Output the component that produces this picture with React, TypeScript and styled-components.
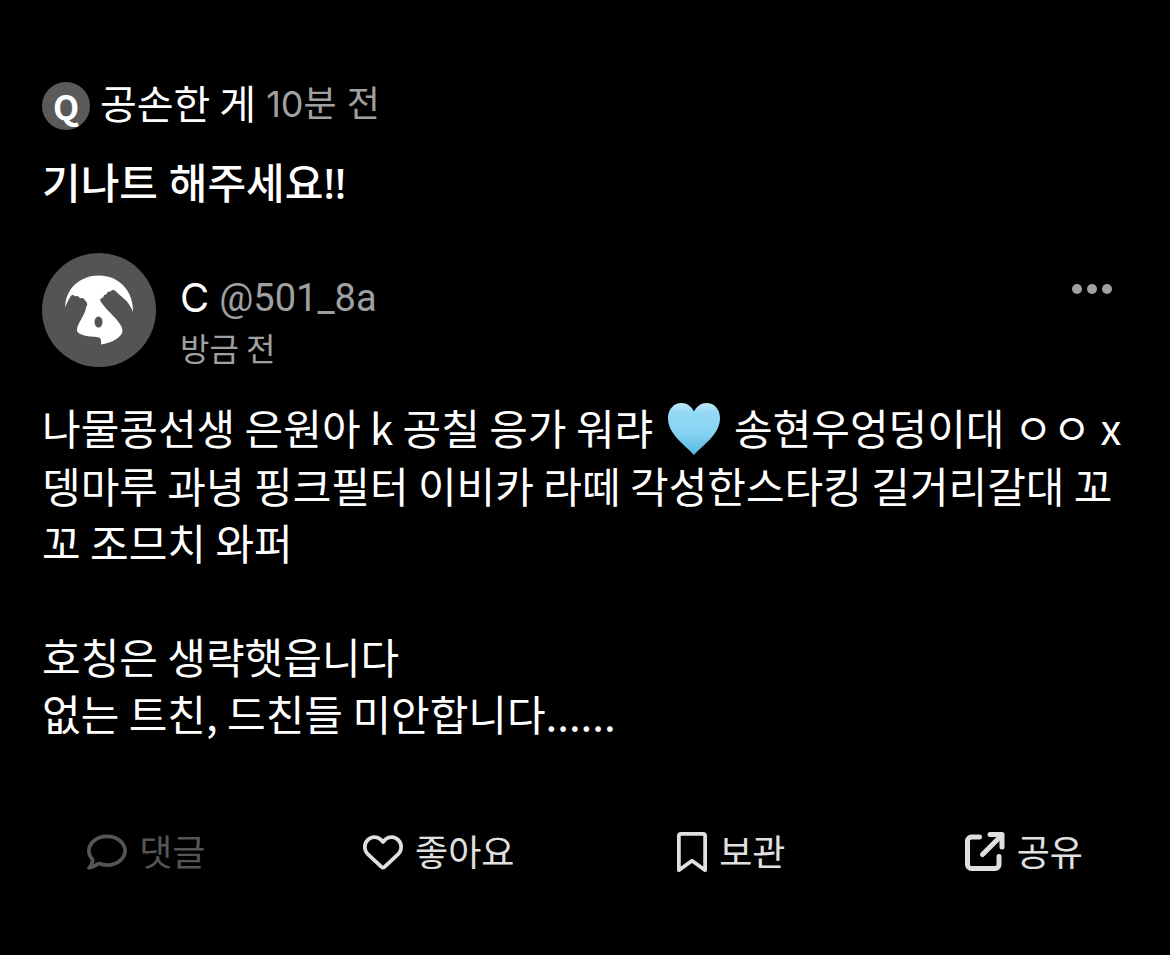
import React from 'react';
import styled, { createGlobalStyle } from 'styled-components';
import { FaRegBookmark, FaRegComment, FaRegHeart } from 'react-icons/fa6';

const GlobalStyle = createGlobalStyle`
  * { box-sizing: border-box; }
  body {
    margin: 0;
    background: #000;
    color: #fff;
    font-family: "Noto Sans CJK KR", sans-serif;
  }
`;

const Page = styled.main`
  padding: 72px 0;
`;

const Content = styled.article`
  padding: 0 42px;
`;

const AskerRow = styled.header`
  display: flex;
  align-items: flex-start;
  gap: 10px;
  height: 60px;
`;

const AskerBadge = styled.span`
  display: grid;
  place-items: center;
  width: 48px;
  height: 48px;
  margin-top: 10px;
  border-radius: 50%;
  background: #5a5a5a;
  font-size: 34px;
  font-weight: 700;
  line-height: 48px;
`;

const Name = styled.span`
  font-size: 40px;
  line-height: 60px;
`;

const Muted = styled.span`
  font-family: Inter, "Noto Sans CJK KR", sans-serif;
  font-size: 36px;
  line-height: 64px;
  color: #a0a0a0;
`;

const PostedAt = styled.time`
  font-size: 32px;
  line-height: 48px;
  color: #a0a0a0;
`;

const Question = styled.h1`
  margin: 23px 0 0;
  font-family: "Noto Sans", "Noto Sans CJK KR", sans-serif;
  font-size: 42px;
  font-weight: 500;
  line-height: 56px;
`;

const Profile = styled.section`
  display: flex;
  gap: 24px;
  margin-top: 42px;
`;

const Avatar = styled.svg`
  flex: none;
  width: 114px;
  height: 114px;
`;

const Identity = styled.div`
  flex: 1;
  display: flex;
  flex-direction: column;
  padding-top: 20px;
`;

const NameLine = styled.div`
  display: flex;
  align-items: center;
  gap: 10px;
  height: 50px;
  font-family: Inter, "Liberation Sans", sans-serif;
`;

const Handle = styled.a`
  font-family: Roboto, "Liberation Sans", sans-serif;
  font-size: 38px;
  line-height: 50px;
  color: #a0a0a0;
  text-decoration: none;
`;

const MoreButton = styled.button`
  align-self: flex-start;
  display: grid;
  padding: 0;
  margin: 30px 15px 0 0;
  border: 0;
  background: none;
  color: #a0a0a0;
`;

const Answer = styled.div`
  margin-top: 27px;
  font-size: 42px;
  line-height: 57px;
`;

const Paragraph = styled.p`
  margin: 0 0 57px;
  word-break: break-all;
`;

const HeartEmoji = styled.svg`
  width: 54px;
  height: 54px;
  margin: -8px 4px 0;
  vertical-align: -11px;
`;

const Actions = styled.nav`
  display: grid;
  grid-template-columns: repeat(4, 1fr);
  margin-top: 81px;
`;

const Action = styled.button`
  display: flex;
  align-items: center;
  justify-content: center;
  gap: 12px;
  height: 60px;
  padding: 0;
  border: 0;
  background: none;
  color: #e0e0e0;
  font-family: inherit;
  font-size: 36px;
  line-height: 56px;

  &:disabled { color: #555; }
`;

const Label = styled.span`
  height: 60px;
`;

const BookmarkIcon = styled(FaRegBookmark)`
  width: 30px;
  height: 40px;
`;

const ShareIcon = () => (
  <svg width="40" height="40" viewBox="0 0 40 40" fill="none" stroke="currentColor" strokeWidth="5" strokeLinecap="round" strokeLinejoin="round" aria-hidden="true">
    <path d="M14.500 5H6.500a4 4 0 0 0-4 4v23.500a4 4 0 0 0 4 4h23.500a4 4 0 0 0 4-4v-8" />
    <path d="M17.500 22.500 36 4" />
    <path d="M25 2.500h12V15" />
  </svg>
);

export default function App() {
  return (
    <>
      <GlobalStyle />
      <Page>
        <Content>
          <AskerRow>
            <AskerBadge>Q</AskerBadge>
            <Name>공손한 게</Name>
            <Muted>10분 전</Muted>
          </AskerRow>
          <Question>기나트 해주세요!!</Question>
          <Profile>
            <Avatar viewBox="0 0 114 114" aria-hidden="true">
              <circle cx="57" cy="57" r="57" fill="#545454" />
              <path
                fill="#fff"
                d="M23.300 54.500C23 36 38 22.500 57 22.500S91.500 37 91 59C89 54 87 51 84.500 48L75 39.500C73 36.500 70 36 68.500 38.500C66 38 64.500 39.500 64.500 41.500C62.500 41 61 42.500 61.500 44.500C58.500 44.500 57.500 47 59 49C61 52 64 55.500 67 58.500C72 64 80.500 71.500 80.500 78C80 84 70 90 59 91.500C59.500 87.500 59 84.500 56 84.200C49 83.500 36 83 35 77.500C34.500 71 43.500 62 44 54.500C46 52 45.500 49 43 47.500C42 45 39.500 44.500 38 45.500C37 43 34.500 42.500 33 43.500C32 41.500 29.500 41.500 28.500 43.500C26.500 47 24.500 50 23.300 54.500Z"
              />
              <ellipse cx="56.500" cy="69" rx="4" ry="5.500" fill="#545454" />
            </Avatar>
            <Identity>
              <NameLine>
                <Name>C</Name>
                <Handle href="#profile">@501_8a</Handle>
              </NameLine>
              <PostedAt>방금 전</PostedAt>
            </Identity>
            <MoreButton type="button" aria-label="더보기">
              <svg width="42" height="12" viewBox="0 0 42 12" fill="currentColor" aria-hidden="true">
                <circle cx="6" cy="6" r="5" />
                <circle cx="21" cy="6" r="5" />
                <circle cx="36" cy="6" r="5" />
              </svg>
            </MoreButton>
          </Profile>
          <Answer>
            <Paragraph>
              나물콩선생 은원아 k 공칠 응가 워랴{' '}
              <HeartEmoji viewBox="0 0 54 54" role="img" aria-label="하늘색 하트">
                <defs>
                  <linearGradient id="heartFill" x1="0" y1="0" x2="0" y2="1">
                    <stop offset="0" stopColor="#c4e8f7" />
                    <stop offset="0.16" stopColor="#96daf6" />
                    <stop offset="0.6" stopColor="#85d2f3" />
                    <stop offset="1" stopColor="#56b6e2" />
                  </linearGradient>
                </defs>
                <path fill="url(#heartFill)" d="M27 53C16 41 1 32 1 16 1 7 7 1 14.500 1 20 1 24 4 27 9.500 30 4 34 1 39.500 1 47 1 53 7 53 16 53 32 38 41 27 53Z" />
              </HeartEmoji>{' '}
              송현우엉덩이대 ㅇㅇ x 뎅마루 과녕 핑크필터 이비카 라떼 각성한스타킹 길거리갈대 꼬꼬 조므치 와퍼
            </Paragraph>
            <Paragraph>
              호칭은 생략햇읍니다
              <br />
              없는 트친, 드친들 미안합니다......
            </Paragraph>
          </Answer>
        </Content>
        <Actions>
          <Action type="button" disabled>
            <FaRegComment size={40} />
            <Label>댓글</Label>
          </Action>
          <Action type="button">
            <FaRegHeart size={40} />
            <Label>좋아요</Label>
          </Action>
          <Action type="button">
            <BookmarkIcon />
            <Label>보관</Label>
          </Action>
          <Action type="button">
            <ShareIcon />
            <Label>공유</Label>
          </Action>
        </Actions>
      </Page>
    </>
  );
}
